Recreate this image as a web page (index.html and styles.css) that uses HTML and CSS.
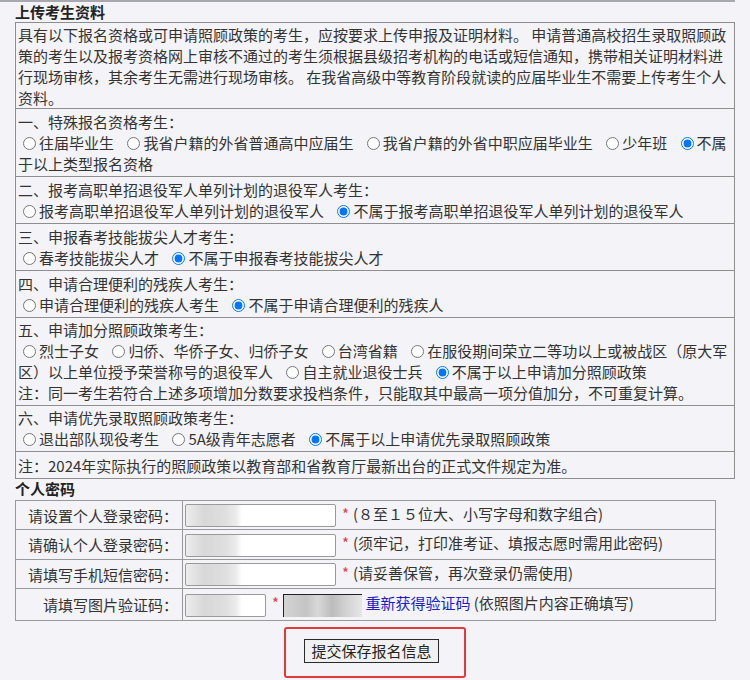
FILE: index.html
```html
<!DOCTYPE html>
<html lang="zh-CN">
<head>
    <meta charset="UTF-8">
    <meta name="viewport" content="width=device-width, initial-scale=1.0">
    <title>上传考生资料</title>
    <link rel="stylesheet" href="styles.css">
</head>
<body>
    <div class="topline"></div>
    <div class="page">
        <h3 class="sec-title">上传考生资料</h3>
        <table class="info">
            <tr>
                <td class="intro">具有以下报名资格或可申请照顾政策的考生，应按要求上传申报及证明材料。 申请普通高校招生录取照顾政<br>策的考生以及报考资格网上审核不通过的考生须根据县级招考机构的电话或短信通知，携带相关证明材料进<br>行现场审核，其余考生无需进行现场审核。 在我省高级中等教育阶段就读的应届毕业生不需要上传考生个人<br>资料。</td>
            </tr>
            <tr>
                <td>一、特殊报名资格考生：<br>
                    <label class="opt"><input type="radio" name="tszg">往届毕业生</label>
                    <label class="opt"><input type="radio" name="tszg">我省户籍的外省普通高中应届生</label>
                    <label class="opt"><input type="radio" name="tszg">我省户籍的外省中职应届毕业生</label>
                    <label class="opt"><input type="radio" name="tszg">少年班</label>
                    <label class="opt"><input type="radio" name="tszg" checked>不属<br>于以上类型报名资格</label>
                </td>
            </tr>
            <tr>
                <td>二、报考高职单招退役军人单列计划的退役军人考生：<br>
                    <label class="opt"><input type="radio" name="tyjr">报考高职单招退役军人单列计划的退役军人</label>
                    <label class="opt"><input type="radio" name="tyjr" checked>不属于报考高职单招退役军人单列计划的退役军人</label>
                </td>
            </tr>
            <tr>
                <td>三、申报春考技能拔尖人才考生：<br>
                    <label class="opt"><input type="radio" name="bjrc">春考技能拔尖人才</label>
                    <label class="opt"><input type="radio" name="bjrc" checked>不属于申报春考技能拔尖人才</label>
                </td>
            </tr>
            <tr>
                <td>四、申请合理便利的残疾人考生：<br>
                    <label class="opt"><input type="radio" name="cjr">申请合理便利的残疾人考生</label>
                    <label class="opt"><input type="radio" name="cjr" checked>不属于申请合理便利的残疾人</label>
                </td>
            </tr>
            <tr>
                <td class="tight">五、申请加分照顾政策考生：<br>
                    <label class="opt"><input type="radio" name="jf">烈士子女</label>
                    <label class="opt"><input type="radio" name="jf">归侨、华侨子女、归侨子女</label>
                    <label class="opt"><input type="radio" name="jf">台湾省籍</label>
                    <label class="opt"><input type="radio" name="jf">在服役期间荣立二等功以上或被战区（原大军<br>区）以上单位授予荣誉称号的退役军人</label>
                    <label class="opt"><input type="radio" name="jf">自主就业退役士兵</label>
                    <label class="opt"><input type="radio" name="jf" checked>不属于以上申请加分照顾政策</label><br>注：同一考生若符合上述多项增加分数要求投档条件，只能取其中最高一项分值加分，不可重复计算。
                </td>
            </tr>
            <tr>
                <td class="tight">六、申请优先录取照顾政策考生：<br>
                    <label class="opt"><input type="radio" name="yx">退出部队现役考生</label>
                    <label class="opt"><input type="radio" name="yx">5A级青年志愿者</label>
                    <label class="opt"><input type="radio" name="yx" checked>不属于以上申请优先录取照顾政策</label>
                </td>
            </tr>
            <tr>
                <td class="note">注：2024年实际执行的照顾政策以教育部和省教育厅最新出台的正式文件规定为准。</td>
            </tr>
        </table>

        <h3 class="sec-title">个人密码</h3>
        <table class="pwd">
            <tr>
                <td class="lbl">请设置个人登录密码：</td>
                <td><input type="password" class="txt masked"><span class="req">*</span>(８至１５位大、小写字母和数字组合)</td>
            </tr>
            <tr>
                <td class="lbl">请确认个人登录密码：</td>
                <td><input type="password" class="txt masked"><span class="req">*</span>(须牢记，打印准考证、填报志愿时需用此密码)</td>
            </tr>
            <tr>
                <td class="lbl">请填写手机短信密码：</td>
                <td><input type="text" class="txt masked"><span class="req">*</span>(请妥善保管，再次登录仍需使用)</td>
            </tr>
            <tr class="last">
                <td class="lbl">请填写图片验证码：</td>
                <td><input type="text" class="txt short masked"><span class="req">*</span><span class="captcha"></span> <a href="#" class="relink">重新获得验证码</a> (依照图片内容正确填写)</td>
            </tr>
        </table>

        <div class="actions">
            <div class="mark">
                <button type="button" class="submit-button">提交保存报名信息</button>
            </div>
        </div>
    </div>
</body>
</html>
```

FILE: styles.css
```css
body {
    margin: 0;
    background: #f3f3f8;
    font-family: "Noto Sans CJK SC", "Microsoft YaHei", sans-serif;
    font-size: 15px;
    color: #333;
}

.topline {
    width: 735px;
    border-top: 2px solid #a8a8b0;
}

.page {
    padding-left: 15px;
}

.sec-title {
    margin: 0;
    font-size: 15px;
    font-weight: bold;
    line-height: 20px;
    color: #222;
}

.info {
    width: 720px;
    border-collapse: collapse;
    table-layout: fixed;
}

.info td {
    border: 1px solid #8e8e8e;
    padding: 2px;
    line-height: 21px;
    white-space: nowrap;
}

.info td.intro {
    padding: 1px 2px 0;
}

.info td.tight {
    padding: 1px 2px 2px;
}

.info td.note {
    padding: 3px 2px 2px;
}

.opt {
    margin-right: 5px;
}

.opt input {
    vertical-align: -1px;
}

.pwd {
    width: 701px;
    border-collapse: collapse;
    margin-top: 1px;
}

.pwd td {
    border: 1px solid #999;
    padding: 3px 2px 2px;
    line-height: 20px;
}

.pwd .last td {
    padding: 4px 2px 3px;
}

.pwd td.lbl {
    width: 160px;
    text-align: right;
    padding-right: 4px;
}

.txt {
    width: 151px;
    height: 23px;
    box-sizing: border-box;
    border: 1px solid #9a9a9a;
    border-radius: 2px;
    padding: 0 4px;
    vertical-align: middle;
    background: #fff;
}

.txt.short {
    width: 81px;
}

.masked {
    background: linear-gradient(90deg, #ececec 0, #d8d8d8 18px, #dedede 38px, #ebebeb 50px, #fff 56px);
}

.req {
    color: #e0404a;
    margin: 0 4px 0 6px;
}

.captcha {
    display: inline-block;
    width: 78px;
    height: 22px;
    vertical-align: middle;
    border-top: 1px solid #222;
    border-left: 1px solid #222;
    background: linear-gradient(90deg, #d4d4d4 0, #c4c4c4 22px, #d8d8d8 34px, #bcbcbc 48px, #d2d2d2 62px, #e6e6e6 78px);
}

.relink {
    color: #1c1cc8;
    text-decoration: none;
}

.actions {
    width: 720px;
    text-align: center;
    margin-top: 6px;
}

.mark {
    display: inline-block;
    border: 2px solid #e23a36;
    border-radius: 3px;
    padding: 10px 25px 13px 18px;
}

.submit-button {
    font-family: inherit;
    font-size: 15px;
    line-height: 20px;
    padding: 1px 6px;
    color: #222;
    background: #f0f0f0;
    border: 1px solid #2a2a2a;
    border-radius: 0;
}
```
